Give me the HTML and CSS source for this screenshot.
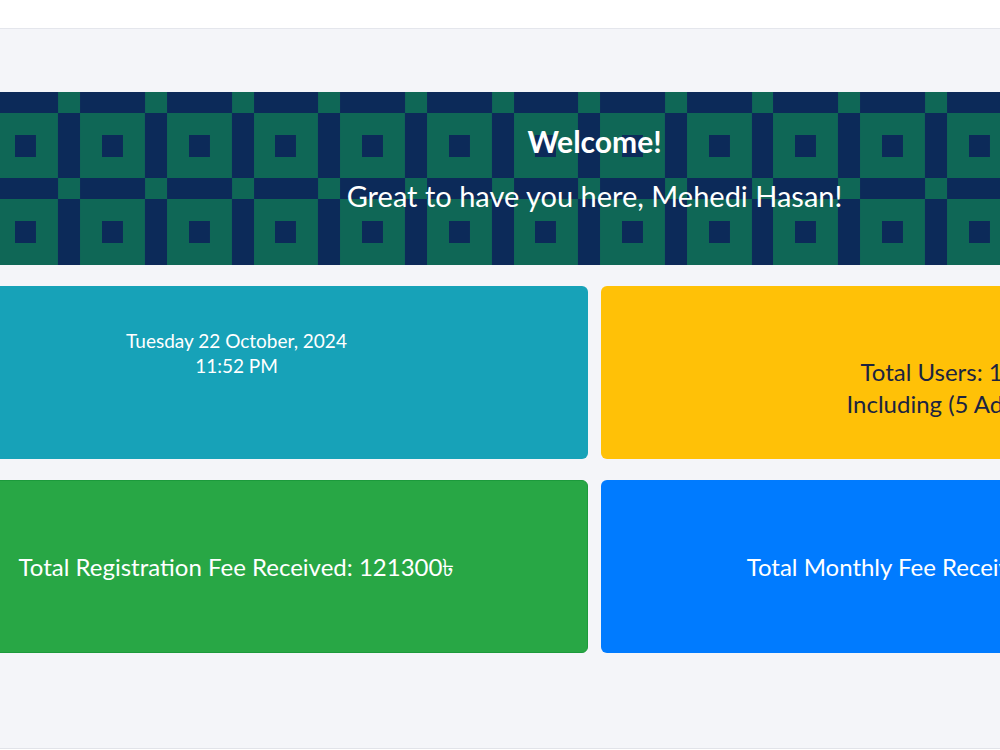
FILE: index.html
```html
<!DOCTYPE html>
<html lang="en">
<head>
    <meta charset="UTF-8">
    <meta name="viewport" content="width=device-width, initial-scale=1.0">
    <title>Dashboard</title>
    <link rel="stylesheet" href="styles.css">
</head>
<body>
    <!-- Верхняя панель -->
    <header class="topbar"></header>

    <main class="content">
        <!-- Приветствие -->
        <section class="welcome">
            <h2 class="welcome-title">Welcome!</h2>
            <p class="welcome-text">Great to have you here, Mehedi Hasan!</p>
        </section>

        <!-- Карточки статистики -->
        <div class="stats">
            <div class="card card-info card-clock">
                <div class="clock-date">Tuesday 22 October, 2024</div>
                <div class="clock-time">11:52 PM</div>
            </div>
            <div class="card card-warning">
                <div>Total Users: 1250</div>
                <div>Including (5 Admins)</div>
            </div>
            <div class="card card-success">
                <div>Total Registration Fee Received: 121300৳</div>
            </div>
            <div class="card card-primary">
                <div>Total Monthly Fee Received: 1198500৳</div>
            </div>
        </div>
    </main>

    <footer class="footer"></footer>
</body>
</html>
```

FILE: styles.css
```css
/* Общие стили */
body {
    margin: 0;
    padding: 0;
    background: #f4f5f9;
    font-family: "Source Sans Pro", Lato, "Noto Sans", sans-serif;
    overflow: hidden;
}

.topbar {
    height: 28px;
    background: #fff;
    border-bottom: 1px solid #e4e6ec;
}

/* Основная область */
.content {
    width: 1419px;
    margin-left: -115px;
    height: 719px;
    padding-top: 63px;
    box-sizing: border-box;
}

/* Приветствие */
.welcome {
    height: 173px;
    box-sizing: border-box;
    padding-top: 29px;
    text-align: center;
    color: #fff;
    background-color: #0c2a59;
    background-image: url("data:image/svg+xml,%3Csvg xmlns='http://www.w3.org/2000/svg' width='87' height='87' viewBox='0 0 87 87'%3E%3Crect width='87' height='87' fill='%230c2a59'/%3E%3Crect width='22' height='21' fill='%230f6756'/%3E%3Crect x='22' y='21' width='65' height='66' fill='%230f6756'/%3E%3Crect x='44' y='43' width='21' height='22' fill='%230c2a59'/%3E%3C/svg%3E");
    background-size: 86.67px 86.5px;
    background-position: 0 0;
}

.welcome-title {
    margin: 0;
    font-size: 30px;
    font-weight: 700;
    line-height: 40px;
}

.welcome-text {
    margin: 15px 0 0;
    font-size: 29px;
    line-height: 40px;
}

/* Карточки */
.stats {
    display: grid;
    grid-template-columns: 1fr 1fr;
    column-gap: 13px;
    row-gap: 21px;
    margin-top: 21px;
}

.card {
    height: 173px;
    box-sizing: border-box;
    border-radius: 6px;
    display: flex;
    flex-direction: column;
    justify-content: center;
    align-items: center;
    text-align: center;
    color: #fff;
    font-size: 24px;
    line-height: 32px;
}

.card-info {
    background: #17a2b8;
}

.card-clock {
    justify-content: flex-start;
    padding-top: 42px;
    font-size: 19px;
    line-height: 25px;
}

.card-warning {
    background: #ffc107;
    color: #1c2440;
    padding-top: 30px;
}

.card-success {
    background: #28a745;
    border: 1px solid #1c9a3c;
}

.card-primary {
    background: #007bff;
}

.footer {
    height: 3px;
    border-top: 1px solid #e1e3e9;
    background: #fff;
}
```
